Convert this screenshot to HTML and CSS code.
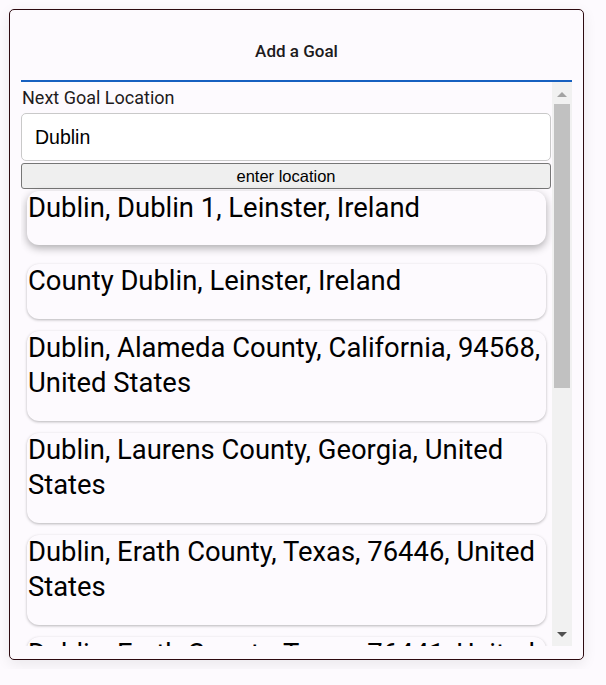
FILE: index.html
```html
<!DOCTYPE html>
<html>
<head>
<meta charset="utf-8">
<link rel="stylesheet" href="styles.css">
</head>
<body>
<div class="dialog">
  <div class="header">Add a Goal</div>
  <div class="scroller">
    <div class="content">
      <label class="label" for="loc">Next Goal Location</label>
      <input id="loc" class="input" type="text" value="Dublin">
      <button class="btn">enter location</button>
      <div class="result raised">Dublin, Dublin 1, Leinster, Ireland</div>
      <div class="result second">County Dublin, Leinster, Ireland</div>
      <div class="result">Dublin, Alameda County, California, 94568, United States</div>
      <div class="result">Dublin, Laurens County, Georgia, United States</div>
      <div class="result">Dublin, Erath County, Texas, 76446, United States</div>
      <div class="result">Dublin, Erath County, Texas, 76441, United States</div>
      <div class="result">Dublin, Franklin County, Ohio, 43017, United States</div>
    </div>
    <div class="scrollbar">
      <div class="arrow up"></div>
      <div class="track"><div class="thumb"></div></div>
      <div class="arrow down"></div>
    </div>
  </div>
</div>
</body>
</html>
```
FILE: styles.css
```css
html, body {
  margin: 0;
  padding: 0;
  background: #fdfafe;
}
body {
  padding: 9px;
  font-family: Roboto, "Noto Sans", sans-serif;
}
.dialog {
  box-sizing: border-box;
  width: 575px;
  height: 651px;
  border: 1px solid #2e0a10;
  border-radius: 5px;
  background: #fdfafe;
  box-shadow: 0 4px 14px rgba(0, 0, 0, 0.08);
  padding: 0 11px;
  display: flex;
  flex-direction: column;
}
.header {
  box-sizing: border-box;
  height: 72px;
  padding-top: 12px;
  flex: none;
  display: flex;
  align-items: center;
  justify-content: center;
  font-size: 17px;
  font-weight: 500;
  color: #1d1b20;
  border-bottom: 2px solid #1760c0;
}
.scroller {
  height: 564px;
  flex: none;
  overflow: hidden;
  display: flex;
}
.content {
  flex: 1;
  min-width: 0;
  display: flex;
  flex-direction: column;
  overflow: hidden;
}
.scrollbar {
  width: 20px;
  flex: none;
  background: #f1f1f1;
  display: flex;
  flex-direction: column;
  align-items: center;
}
.arrow {
  height: 17px;
  flex: none;
  display: flex;
  align-items: center;
  justify-content: center;
  width: 100%;
}
.arrow::before {
  content: "";
  width: 0;
  height: 0;
  border-left: 5px solid transparent;
  border-right: 5px solid transparent;
}
.arrow.up::before {
  border-bottom: 5px solid #a3a3a3;
  margin-top: 8px;
}
.arrow.down::before {
  border-top: 5px solid #505050;
  margin-bottom: 6px;
}
.track {
  flex: 1;
  width: 100%;
  padding: 5px 2px 0 2px;
  box-sizing: border-box;
}
.thumb {
  height: 284px;
  background: #c1c1c1;
}
.label {
  display: block;
  font-size: 18px;
  line-height: 31px;
  color: #1d1b20;
  padding-left: 1px;
}
.input {
  box-sizing: border-box;
  width: 530px;
  height: 48px;
  margin: 0;
  border: 1px solid #c9c9c9;
  border-radius: 5px;
  background: #fff;
  padding: 0 13px;
  font-family: "Liberation Sans", Arial, sans-serif;
  font-size: 19.5px;
  color: #000;
  outline: none;
  flex: none;
}
.btn {
  box-sizing: border-box;
  width: 530px;
  height: 26px;
  margin: 2px 0 0;
  padding: 0;
  border: 1px solid #767676;
  border-radius: 3px;
  background: #efefef;
  font-family: "Liberation Sans", Arial, sans-serif;
  font-size: 16.5px;
  line-height: 22px;
  color: #000;
  flex: none;
}
.result {
  flex: none;
  margin: 12px 6px 0 6px;
  padding: 0 0 20px 1px;
  font-size: 27.4px;
  line-height: 35px;
  color: #000;
  background: #fdfafe;
  border-radius: 12px;
  box-shadow: 0 1px 3px rgba(0, 0, 0, 0.28);
}
.result.raised {
  margin-top: 2px;
  padding-bottom: 19px;
  box-shadow: 0 3px 9px rgba(0, 0, 0, 0.32);
}
.result.second {
  margin-top: 19px;
}
```
